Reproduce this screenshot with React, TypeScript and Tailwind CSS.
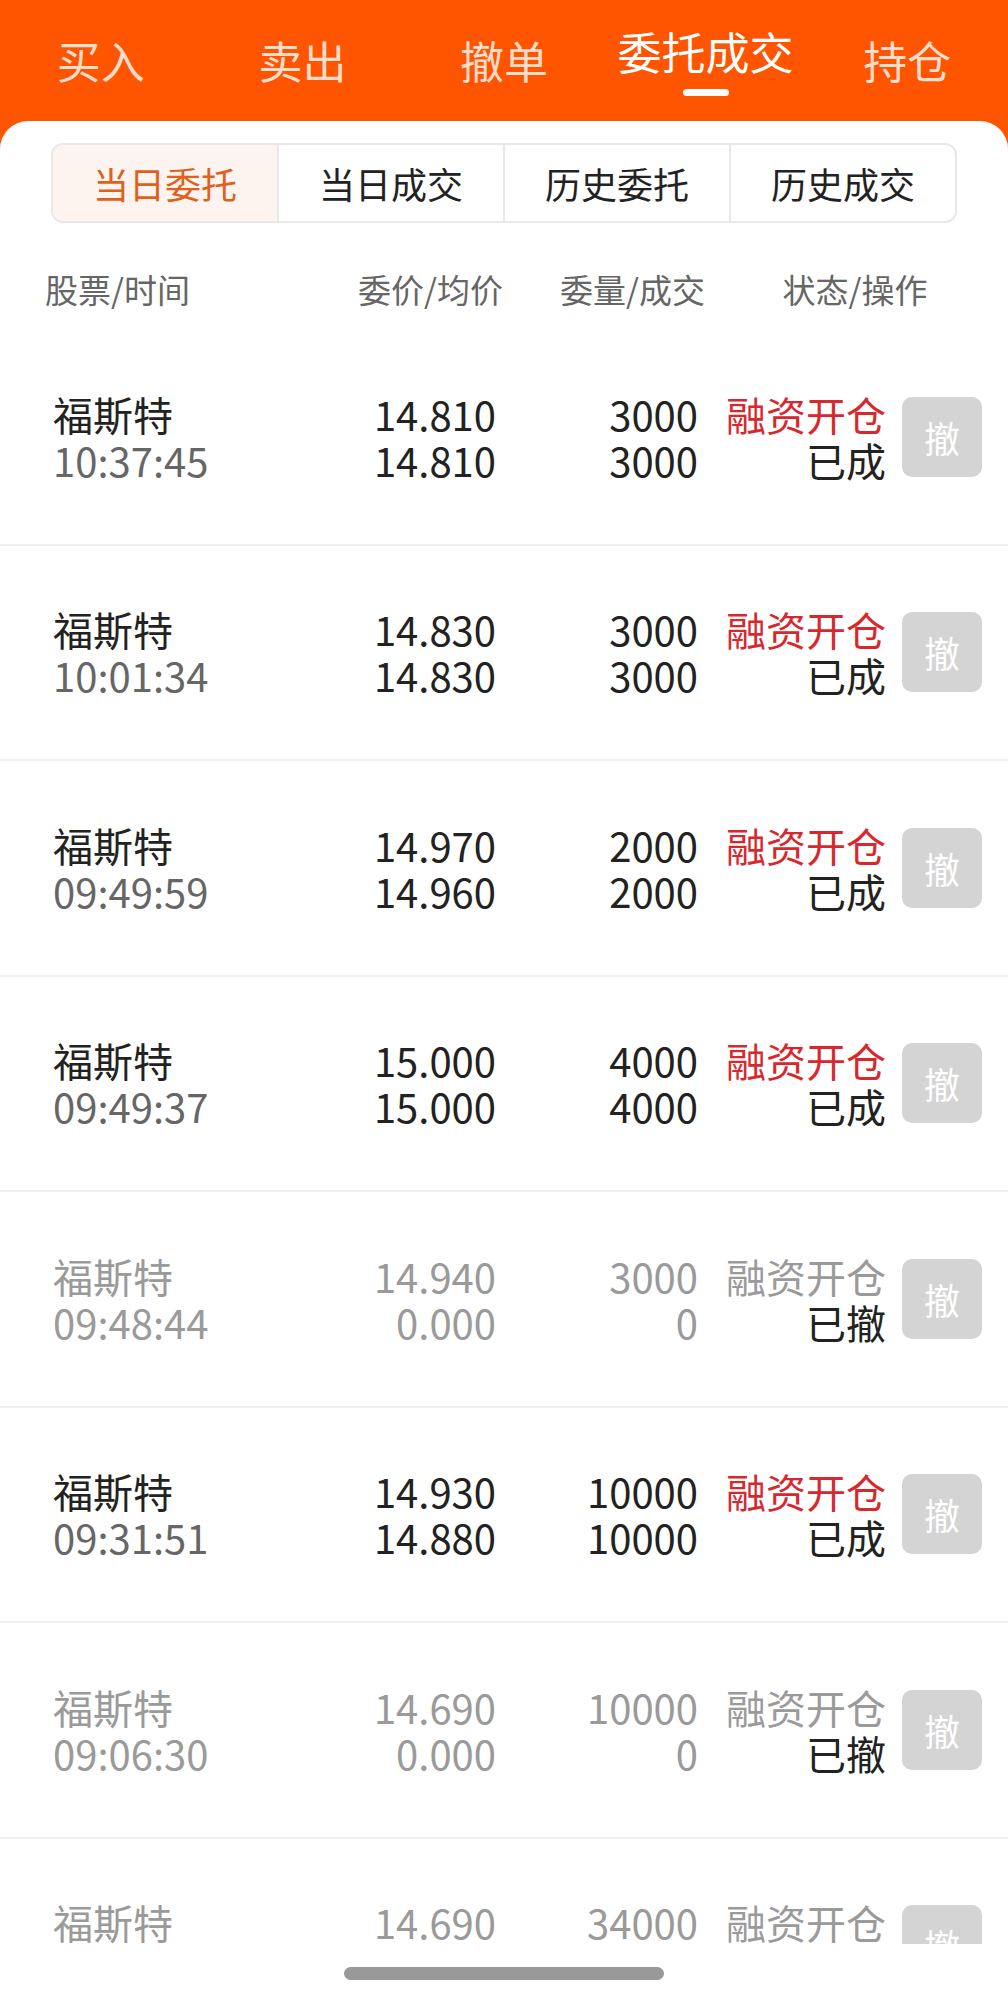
import React from "react";

type Order = {
  name: string;
  time: string;
  price: string;
  avg: string;
  qty: string;
  filled: string;
  status: string;
  cancelled: boolean;
};

const orders: Order[] = [
  { name: "福斯特", time: "10:37:45", price: "14.810", avg: "14.810", qty: "3000", filled: "3000", status: "已成", cancelled: false },
  { name: "福斯特", time: "10:01:34", price: "14.830", avg: "14.830", qty: "3000", filled: "3000", status: "已成", cancelled: false },
  { name: "福斯特", time: "09:49:59", price: "14.970", avg: "14.960", qty: "2000", filled: "2000", status: "已成", cancelled: false },
  { name: "福斯特", time: "09:49:37", price: "15.000", avg: "15.000", qty: "4000", filled: "4000", status: "已成", cancelled: false },
  { name: "福斯特", time: "09:48:44", price: "14.940", avg: "0.000", qty: "3000", filled: "0", status: "已撤", cancelled: true },
  { name: "福斯特", time: "09:31:51", price: "14.930", avg: "14.880", qty: "10000", filled: "10000", status: "已成", cancelled: false },
  { name: "福斯特", time: "09:06:30", price: "14.690", avg: "0.000", qty: "10000", filled: "0", status: "已撤", cancelled: true },
  { name: "福斯特", time: "09:05:12", price: "14.690", avg: "0.000", qty: "34000", filled: "0", status: "已撤", cancelled: true },
];

const topTabs = ["买入", "卖出", "撤单", "委托成交", "持仓"];
const subTabs = ["当日委托", "当日成交", "历史委托", "历史成交"];

function OrderRow({ o }: { o: Order }) {
  const main = o.cancelled ? "text-[#9a9a9a]" : "text-[#222222]";
  const time = o.cancelled ? "text-[#9a9a9a]" : "text-[#666666]";
  const tag = o.cancelled ? "text-[#9a9a9a]" : "text-[#d8282e]";
  return (
    <div className="flex h-[215.5px] shrink-0 items-center border-b-2 border-[#f0f0f0] pl-[53px] pr-[26px] text-[40px] leading-[46px]">
      <div className="flex w-[247px] flex-col">
        <span className={main}>{o.name}</span>
        <span className={time}>{o.time}</span>
      </div>
      <div className={`flex w-[196px] flex-col text-right ${main}`}>
        <span>{o.price}</span>
        <span>{o.avg}</span>
      </div>
      <div className={`flex w-[202px] flex-col text-right ${main}`}>
        <span>{o.qty}</span>
        <span>{o.filled}</span>
      </div>
      <div className="flex w-[188px] flex-col text-right">
        <span className={tag}>融资开仓</span>
        <span className="text-[#222222]">{o.status}</span>
      </div>
      <div className="ml-[16px] flex h-[80px] w-[80px] items-center justify-center rounded-[10px] bg-[#d4d4d4] text-[36px] text-white">
        撤
      </div>
    </div>
  );
}

export default function App() {
  return (
    <div
      className="flex h-[1998px] w-[1008px] flex-col overflow-hidden bg-[#ff5500]"
      style={{ fontFamily: '"Noto Sans CJK SC", "Noto Sans", sans-serif' }}
    >
      {/* Top tabs */}
      <div className="grid h-[121px] shrink-0 grid-cols-5">
        {topTabs.map((t, i) =>
          i === 3 ? (
            <div key={t} className="flex flex-col items-center pt-[29px]">
              <span className="text-[44px] leading-[44px] text-white">{t}</span>
              <span className="mt-[16px] h-[7px] w-[46px] rounded-full bg-white" />
            </div>
          ) : (
            <div key={t} className="flex flex-col items-center pt-[38px]">
              <span className="text-[44px] leading-[44px] text-[#ffdccb]">{t}</span>
            </div>
          )
        )}
      </div>

      {/* Card */}
      <div className="flex min-h-0 flex-1 flex-col rounded-t-[28px] bg-white">
        <div className="mx-[51px] mt-[22px] flex h-[80px] shrink-0 overflow-hidden rounded-[12px] border-2 border-[#e8e8e8]">
          {subTabs.map((t, i) => (
            <div
              key={t}
              className={
                i === 0
                  ? "flex flex-1 items-center justify-center bg-[#fdf4f0] text-[36px] text-[#e0601c]"
                  : "flex flex-1 items-center justify-center border-l-2 border-[#e8e8e8] text-[36px] text-[#222222]"
              }
            >
              {t}
            </div>
          ))}
        </div>

        {/* Column header */}
        <div className="flex h-[107px] shrink-0 items-start pl-[45px] pt-[46px] text-[33px] leading-[40px] text-[#666666]">
          <span className="w-[255px]">股票/时间</span>
          <span className="w-[203px] text-right">委价/均价</span>
          <span className="w-[202px] text-right">委量/成交</span>
          <span className="w-[300px] text-center">状态/操作</span>
        </div>

        {/* Orders */}
        <div className="flex h-[1614px] shrink-0 flex-col overflow-hidden">
          {orders.map((o, i) => (
            <OrderRow key={i} o={o} />
          ))}
        </div>

        {/* Home indicator */}
        <div className="flex flex-1 justify-center pt-[23px]">
          <span className="h-[13px] w-[320px] rounded-full bg-[#999999]" />
        </div>
      </div>
    </div>
  );
}
